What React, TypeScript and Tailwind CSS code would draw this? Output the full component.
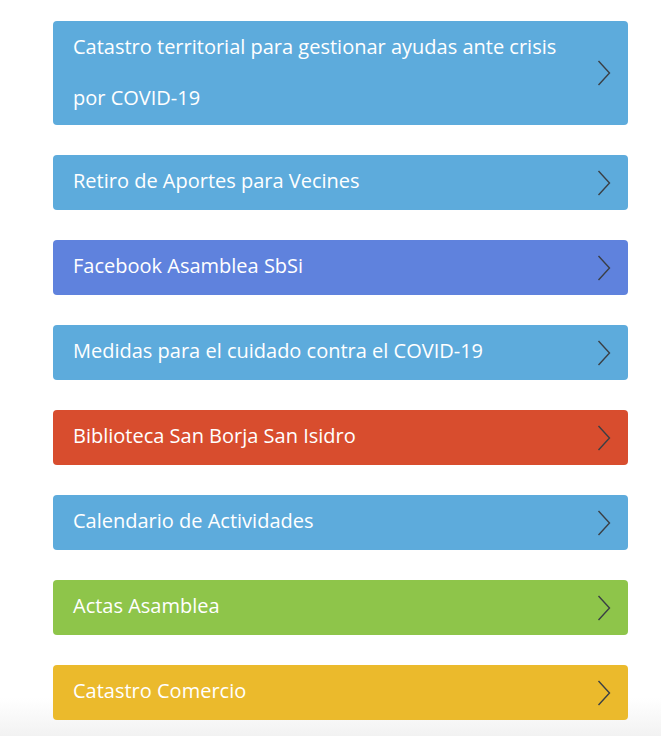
import React from "react";

const items: { label: React.ReactNode; bg: string; tall?: boolean }[] = [
  { label: "Catastro territorial para gestionar ayudas ante crisis por COVID-19", bg: "bg-[#5dabdc]", tall: true },
  { label: "Retiro de Aportes para Vecines", bg: "bg-[#5dabdc]" },
  { label: "Facebook Asamblea SbSi", bg: "bg-[#5f82dd]" },
  { label: "Medidas para el cuidado contra el COVID-19", bg: "bg-[#5dabdc]" },
  { label: "Biblioteca San Borja San Isidro", bg: "bg-[#d84d2e]" },
  { label: "Calendario de Actividades", bg: "bg-[#5dabdc]" },
  { label: "Actas Asamblea", bg: "bg-[#8ec54a]" },
  { label: "Catastro Comercio", bg: "bg-[#ebba2c]" },
];

function Chevron() {
  return (
    <svg width="14" height="26" viewBox="0 0 14 26" fill="none" className="shrink-0">
      <path d="M1.5 1 L12.5 13 L1.5 25" stroke="#3a3f45" strokeWidth="1.4" />
    </svg>
  );
}

export default function App() {
  return (
    <div
      className="w-[661px] h-[736px] overflow-hidden bg-[linear-gradient(to_bottom,#ffffff_0px,#ffffff_698px,#f2f2f2_736px)]"
      style={{ fontFamily: '"Open Sans", "Noto Sans", sans-serif' }}
    >
      <div className="flex flex-col gap-[30px] pt-[21px] pl-[53px] w-[628px]">
        {items.map((it, i) => (
          <a
            key={i}
            className={`${it.bg} ${it.tall ? "h-[104px]" : "h-[55px]"} rounded-[4px] flex items-center justify-between pl-[20px] pr-[17px] text-white text-[20px] cursor-pointer`}
          >
            <span className={it.tall ? "leading-[51px] pr-[20px] mb-[3px]" : "leading-[55px] mb-[5px]"}>{it.label}</span>
            <Chevron />
          </a>
        ))}
      </div>
    </div>
  );
}
